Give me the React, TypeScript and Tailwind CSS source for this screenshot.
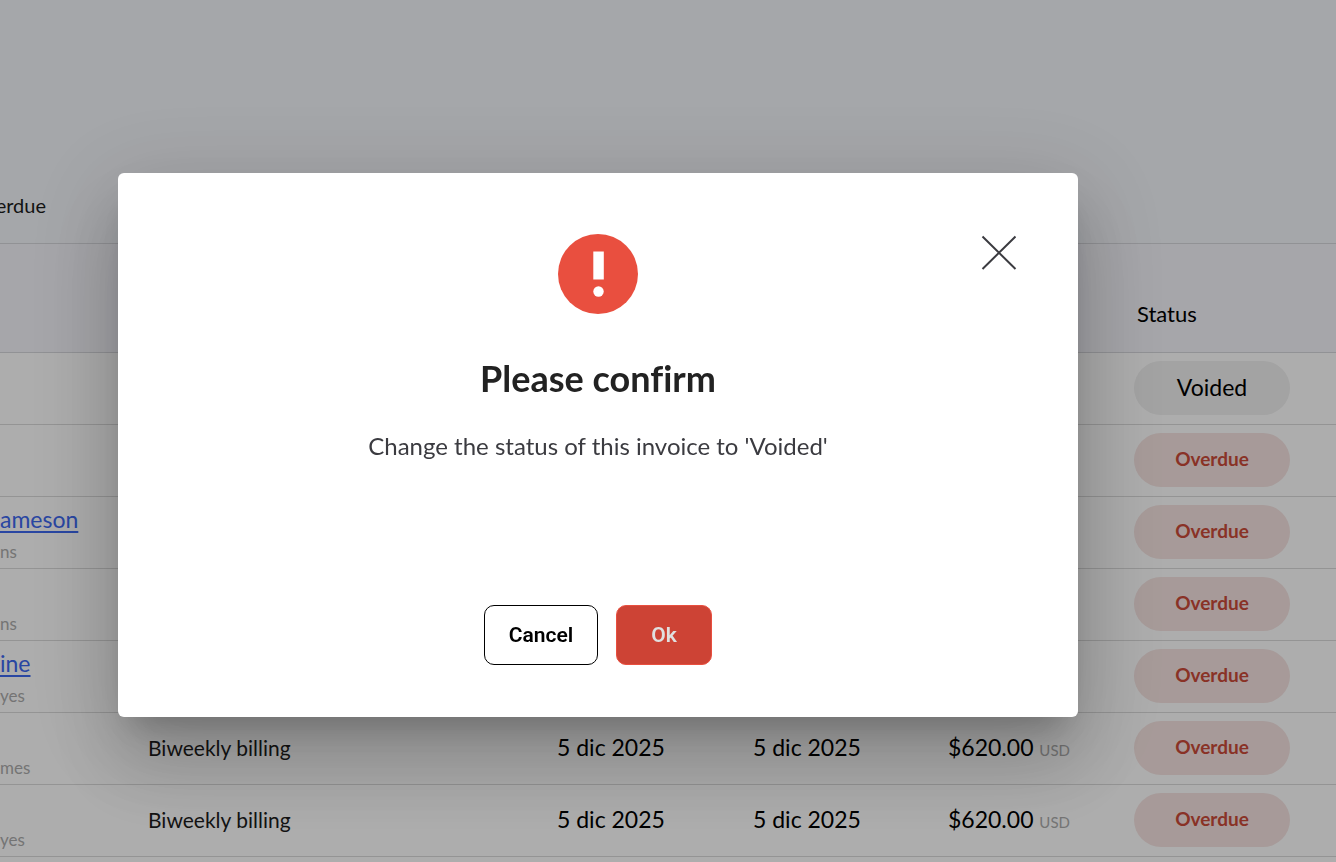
import { useState } from 'react'

type Invoice = {
    id: number
    client?: string
    contact?: string
    description?: string
    issued?: string
    due?: string
    amount?: string
    status: 'Voided' | 'Overdue'
}

const invoices: Invoice[] = [
    { id: 1, status: 'Voided' },
    { id: 2, status: 'Overdue' },
    { id: 3, client: 'ameson', contact: 'ns', status: 'Overdue' },
    { id: 4, contact: 'ns', status: 'Overdue' },
    { id: 5, client: 'ine', contact: 'yes', status: 'Overdue' },
    { id: 6, contact: 'mes', description: 'Biweekly billing', issued: '5 dic 2025', due: '5 dic 2025', amount: '$620.00', status: 'Overdue' },
    { id: 7, contact: 'yes', description: 'Biweekly billing', issued: '5 dic 2025', due: '5 dic 2025', amount: '$620.00', status: 'Overdue' },
]

function StatusPill({ status }: { status: Invoice['status'] }) {
    const tone = status === 'Voided'
        ? 'bg-[#f0f0f0] text-black text-[23px]'
        : 'bg-[#f6e4e2] text-[#cb4b39] text-[19px] font-bold'
    return <span className={`flex h-[54px] w-[156px] items-center justify-center rounded-full pb-0.5 ${tone}`}>{status}</span>
}

function InvoiceTable() {
    return (
        <table className="w-full table-fixed border-collapse text-left">
            <colgroup>
                <col className="w-[148px]" />
                <col className="w-[409px]" />
                <col className="w-[196px]" />
                <col className="w-[195px]" />
                <col className="w-[186px]" />
                <col />
            </colgroup>
            <thead>
                <tr className="h-[108px] border-b border-[#d6d7dc] bg-[#f5f5fb] align-bottom">
                    <td colSpan={5} />
                    <th className="pb-[22px] pl-[3px] text-[22px] leading-8 font-normal">Status</th>
                </tr>
            </thead>
            <tbody>
                {invoices.map((inv) => (
                    <tr key={inv.id} className="h-[72px] border-b border-[#dadada]">
                        <td className="p-0 align-bottom">
                            {inv.client && (
                                <a href="#" className="block text-[23px] leading-[34px] text-[#3d68ef] underline decoration-2 underline-offset-3">{inv.client}</a>
                            )}
                            {inv.contact && <div className="text-[17px] leading-8 text-[#acacac]">{inv.contact}</div>}
                        </td>
                        <td className="p-0 pb-px text-[21px] text-[#1c1c1c]">{inv.description}</td>
                        <td className="p-0 pb-px text-[23px]">{inv.issued}</td>
                        <td className="p-0 pb-px text-[23px]">{inv.due}</td>
                        <td className="p-0 pb-px text-[23px]">
                            {inv.amount && <>{inv.amount} <span className="text-[15px] text-[#acacac]">USD</span></>}
                        </td>
                        <td className="p-0"><StatusPill status={inv.status} /></td>
                    </tr>
                ))}
            </tbody>
        </table>
    )
}

function ConfirmDialog({ onClose }: { onClose: () => void }) {
    return (
        <div className="fixed inset-0 flex items-center justify-center bg-black/32 pt-7 pr-[140px]">
            <div
                role="dialog"
                aria-modal="true"
                aria-labelledby="confirm-title"
                className="relative flex w-[960px] flex-col items-center rounded-md bg-white pt-[61px] pb-[52px] shadow-[0_22px_30px_-14px_rgba(0,0,0,0.2),0_48px_76px_6px_rgba(0,0,0,0.14),0_18px_92px_16px_rgba(0,0,0,0.12)]"
            >
                <button type="button" aria-label="Close" onClick={onClose} className="absolute top-[62px] right-[61px] cursor-pointer">
                    <svg width="36" height="36" viewBox="0 0 36 36" fill="none" stroke="#3b3b40" strokeWidth="2">
                        <path d="M1.5 1.5 34.5 34M34.5 1.5 1.5 34" />
                    </svg>
                </button>
                <svg width="80" height="80" viewBox="0 0 80 80" aria-hidden="true">
                    <circle cx="40" cy="40" r="40" fill="#e94f3f" />
                    <path d="M35.3 17.5h10.500v28H35.3z" fill="#fff" />
                    <circle cx="40.5" cy="57.500" r="5.2" fill="#fff" />
                </svg>
                <h2 id="confirm-title" className="mt-10 text-[36px] leading-[48px] font-bold text-[#222222] [font-variant-ligatures:none]">Please confirm</h2>
                <p className="mt-[26px] text-[24px] leading-9 text-[#3b3b40]">Change the status of this invoice to 'Voided'</p>
                <div className="mt-[141px] flex gap-[18px] font-[Roboto,sans-serif] text-[21px] font-semibold">
                    <button type="button" onClick={onClose} className="h-[60px] w-[114px] cursor-pointer rounded-[10px] border border-black bg-white pt-0.5 text-black">Cancel</button>
                    <button type="button" onClick={onClose} className="h-[60px] w-24 cursor-pointer rounded-[10px] border border-[#e94f3f] bg-[#cd4335] pt-0.5 text-[#e0e0e0]">Ok</button>
                </div>
            </div>
        </div>
    )
}

export default function App() {
    const [open, setOpen] = useState(true)

    return (
        <div className="h-screen overflow-hidden bg-white font-[Lato,sans-serif] text-black">
            <div className="flex h-[244px] items-end border-b border-[#d6d7dc] bg-[#f4f6fb] pb-[22px]">
                {/* the tab strip is scrolled, so its label is cut by the left edge */}
                <span className="flex w-[46px] justify-end overflow-hidden text-[20px] leading-8 text-[#1c1c1c]">erdue</span>
            </div>
            <InvoiceTable />
            {open && <ConfirmDialog onClose={() => setOpen(false)} />}
        </div>
    )
}
